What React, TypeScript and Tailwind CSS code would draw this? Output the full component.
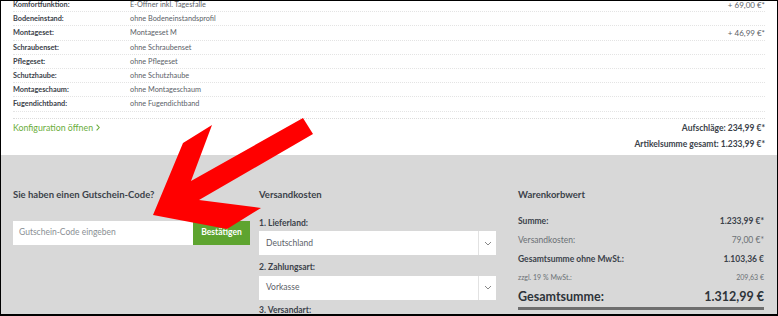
import React from "react";

const rows: [string, string, string?][] = [
  ["Komfortfunktion:", "E-Öffner inkl. Tagesfalle", "+ 69,00 €*"],
  ["Bodeneinstand:", "ohne Bodeneinstandsprofil"],
  ["Montageset:", "Montageset M", "+ 46,99 €*"],
  ["Schraubenset:", "ohne Schraubenset"],
  ["Pflegeset:", "ohne Pflegeset"],
  ["Schutzhaube:", "ohne Schutzhaube"],
  ["Montageschaum:", "ohne Montageschaum"],
  ["Fugendichtband:", "ohne Fugendichtband"],
];

const Chevron = () => (
  <svg width="8" height="5" viewBox="0 0 8 5" fill="none">
    <path d="M1 1l3 3 3-3" stroke="#888" strokeWidth="1" />
  </svg>
);

const Select = ({ value }: { value: string }) => (
  <div className="flex h-[24px] bg-white">
    <div className="flex flex-1 items-center px-[7px] text-[8.5px] text-[#5b6168]">{value}</div>
    <div className="flex w-[18px] items-center justify-center border-l border-[#e2e2e2]">
      <Chevron />
    </div>
  </div>
);

const App = () => {
  return (
    <div
      className="relative flex h-[316px] w-[778px] flex-col overflow-hidden border border-b-2 border-black bg-white leading-none text-[#3b424a]"
      style={{ fontFamily: "Lato, 'Open Sans', sans-serif" }}
    >
      {/* artikel details */}
      <section className="h-[154px] shrink-0 px-3">
        <div className="-mt-[3px]">
          {rows.map(([label, value, price]) => (
            <div
              key={label}
              className="flex h-[14.2px] items-center border-b border-dotted border-[#e4e4e4] text-[7.3px]"
            >
              <span className="w-[117px] font-bold">{label}</span>
              <span className="flex-1 text-[#5b6168]">{value}</span>
              {price && <span className="text-[8px] text-[#5b6168]">{price}</span>}
            </div>
          ))}
        </div>
        <div className="mt-[6px] border-b border-dotted border-[#dcdcdc]" />
        <div className="flex items-start justify-between pt-[5px]">
          <span className="flex items-center gap-[3px] text-[8.8px] text-[#6aad3a]">
            Konfiguration öffnen
            <svg width="4" height="7" viewBox="0 0 4 7" fill="none">
              <path d="M0.6 0.6l2.6 2.9-2.6 2.9" stroke="#6aad3a" strokeWidth="1.1" />
            </svg>
          </span>
          <div className="flex flex-col items-end gap-[8px] text-[8.5px] font-bold">
            <span>Aufschläge: 234,99 €*</span>
            <span>Artikelsumme gesamt: 1.233,99 €*</span>
          </div>
        </div>
      </section>

      {/* warenkorb */}
      <section className="flex flex-1 bg-[#d8d8d8] px-3 pt-[35px]">
        <div className="mr-[9px] w-[237px]">
          <h3 className="text-[9.5px] font-bold">Sie haben einen Gutschein-Code?</h3>
          <div className="mt-[21px] flex h-[24px]">
            <div className="flex flex-1 items-center bg-white px-[6px] text-[8.5px] text-[#8a8f94]">
              Gutschein-Code eingeben
            </div>
            <div className="flex w-[57px] items-center justify-center bg-[#5ea42f] text-[8.5px] font-bold text-white">
              Bestätigen
            </div>
          </div>
        </div>

        <div className="mr-[22px] w-[237px]">
          <h3 className="text-[9.5px] font-bold">Versandkosten</h3>
          <div className="mt-[19px] text-[8.5px] font-bold">1. Lieferland:</div>
          <div className="mt-[4px]">
            <Select value="Deutschland" />
          </div>
          <div className="mt-[8px] text-[8.5px] font-bold">2. Zahlungsart:</div>
          <div className="mt-[4px]">
            <Select value="Vorkasse" />
          </div>
          <div className="mt-[6px] text-[8.5px] font-bold">3. Versandart:</div>
        </div>

        <div className="w-[246px]">
          <h3 className="text-[9.5px] font-bold">Warenkorbwert</h3>
          <div className="mt-[17px] flex justify-between text-[8.5px] font-bold">
            <span>Summe:</span>
            <span>1.233,99 €*</span>
          </div>
          <div className="mt-[11px] flex justify-between text-[8.5px] text-[#6b7075]">
            <span>Versandkosten:</span>
            <span>79,00 €*</span>
          </div>
          <div className="mt-[10px] flex justify-between text-[8.5px] font-bold">
            <span>Gesamtsumme ohne MwSt.:</span>
            <span>1.103,36 €</span>
          </div>
          <div className="mt-[11px] flex justify-between text-[7px] text-[#6b7075]">
            <span>zzgl. 19 % MwSt.:</span>
            <span>209,63 €</span>
          </div>
          <div className="mt-[10px] flex justify-between border-b-[3px] border-[#6e6e6e] pb-[3px] text-[12.5px] font-bold text-[#2e343a]">
            <span>Gesamtsumme:</span>
            <span>1.312,99 €</span>
          </div>
        </div>
      </section>

      {/* roter pfeil */}
      <svg className="absolute left-0 top-0" width="778" height="316" viewBox="0 0 778 316">
        <polygon
          points="152,214 182,142 211,124 190,180 302,117 312,133 198,199 260,207 226,228"
          fill="#ff0000"
        />
      </svg>
    </div>
  );
};

export default App;
